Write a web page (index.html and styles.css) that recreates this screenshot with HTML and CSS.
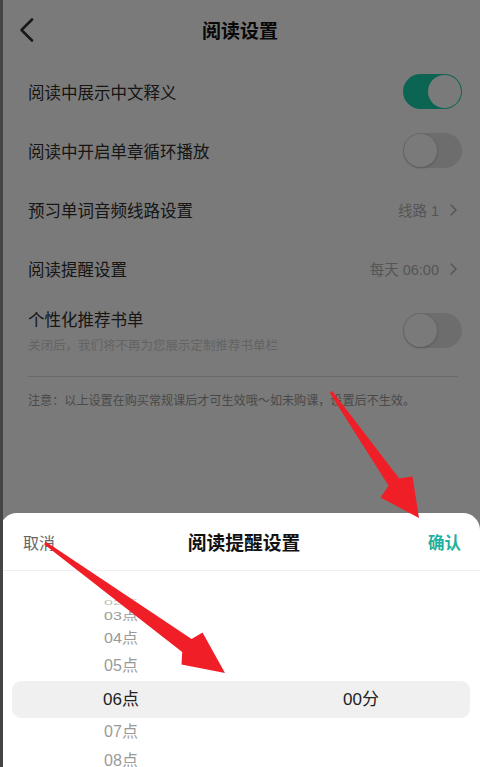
FILE: index.html
```html
<!DOCTYPE html>
<html lang="zh-CN">
<head>
<meta charset="utf-8">
<title>阅读设置</title>
<link rel="stylesheet" href="styles.css">
</head>
<body>
<div class="screen">
  <div class="page">
    <header class="nav">
      <span class="nav-back">
        <svg width="16" height="26" viewBox="0 0 16 26"><path d="M13 2.5 L2.5 13 L13 23.5" fill="none" stroke="#333" stroke-width="2.6" stroke-linecap="round" stroke-linejoin="round"/></svg>
      </span>
      <h1 class="nav-title">阅读设置</h1>
      <span></span>
    </header>

    <div class="row">
      <span class="label">阅读中展示中文释义</span>
      <span class="switch on"><span class="knob"></span></span>
    </div>
    <div class="row">
      <span class="label">阅读中开启单章循环播放</span>
      <span class="switch"><span class="knob"></span></span>
    </div>
    <div class="row">
      <span class="label">预习单词音频线路设置</span>
      <span class="value">线路 1<svg class="chev" width="9" height="14" viewBox="0 0 9 14"><path d="M2 2 L7 7 L2 12" fill="none" stroke="#b5b5b5" stroke-width="1.5" stroke-linecap="round" stroke-linejoin="round"/></svg></span>
    </div>
    <div class="row">
      <span class="label">阅读提醒设置</span>
      <span class="value">每天 06:00<svg class="chev" width="9" height="14" viewBox="0 0 9 14"><path d="M2 2 L7 7 L2 12" fill="none" stroke="#b5b5b5" stroke-width="1.5" stroke-linecap="round" stroke-linejoin="round"/></svg></span>
    </div>
    <div class="row rich">
      <div class="text">
        <div class="label">个性化推荐书单</div>
        <div class="sub">关闭后，我们将不再为您展示定制推荐书单栏</div>
      </div>
      <span class="switch"><span class="knob"></span></span>
    </div>
    <div class="divider"></div>
    <p class="note">注意：以上设置在购买常规课后才可生效哦～如未购课，设置后不生效。</p>
  </div>

  <div class="mask"></div>

  <div class="sheet">
    <div class="sheet-head">
      <span class="cancel">取消</span>
      <span class="sheet-title">阅读提醒设置</span>
      <span class="ok">确认</span>
    </div>
    <div class="picker">
      <div class="prow r02"><span class="cell h">02点</span><span class="cell m"></span></div>
      <div class="prow r03"><span class="cell h">03点</span><span class="cell m"></span></div>
      <div class="prow r04"><span class="cell h">04点</span><span class="cell m"></span></div>
      <div class="prow r05"><span class="cell h">05点</span><span class="cell m"></span></div>
      <div class="prow sel"><span class="cell h">06点</span><span class="cell m">00分</span></div>
      <div class="prow r07"><span class="cell h">07点</span><span class="cell m"></span></div>
      <div class="prow r08"><span class="cell h">08点</span><span class="cell m"></span></div>
    </div>
  </div>

  <div class="edge"></div>

  <svg class="arrows" width="480" height="767" viewBox="0 0 480 767">
    <polygon fill="#f01e26" points="332.2,391.1 399.2,478.4 412.5,476.5 419,518 380.5,497.5 388.6,485.8 329.8,392.9"/>
    <polygon fill="#f01e26" points="45.9,541.8 191.6,639.1 202.5,632.5 225,673 181.5,664.5 182.2,652.1 44.1,544.2"/>
  </svg>
</div>
</body>
</html>
```

FILE: styles.css
```css
html, body {
  margin: 0;
  padding: 0;
}
body {
  font-family: "Noto Sans CJK SC", "Noto Sans", sans-serif;
  background: #fff;
}
.screen {
  position: relative;
  width: 480px;
  height: 767px;
  overflow: hidden;
  background: #fff;
}

/* underlying page */
.page {
  display: flex;
  flex-direction: column;
}
.nav {
  height: 62px;
  display: grid;
  grid-template-columns: 60px 1fr 60px;
  align-items: center;
}
.nav-back {
  padding-left: 19px;
  display: flex;
  align-items: center;
  padding-bottom: 2px;
}
.nav-title {
  margin: 0;
  text-align: center;
  font-size: 19px;
  font-weight: 700;
  color: #111;
  line-height: 24px;
  padding-bottom: 3px;
}
.row {
  height: 59px;
  display: flex;
  align-items: center;
  justify-content: space-between;
  padding: 0 18px 0 28px;
}
.label {
  font-size: 16.5px;
  color: #2e2e2e;
  line-height: 22px;
}
.value {
  display: flex;
  align-items: center;
  gap: 10px;
  font-family: "Liberation Sans", "Noto Sans CJK SC", sans-serif;
  font-size: 14.5px;
  color: #b3b3b3;
  padding-right: 4px;
}
.chev {
  display: block;
}
.row.rich {
  height: auto;
  padding-top: 10px;
  padding-bottom: 23px;
}
.text {
  display: flex;
  flex-direction: column;
  gap: 6px;
}
.sub {
  font-size: 12.5px;
  line-height: 17px;
  color: #cfcfcf;
}
.switch {
  box-sizing: border-box;
  width: 59px;
  height: 35px;
  border-radius: 18px;
  background: #e4e4e4;
  display: flex;
  align-items: center;
  padding: 1px;
}
.switch.on {
  background: #1bd3ae;
  justify-content: flex-end;
}
.knob {
  width: 33px;
  height: 33px;
  border-radius: 50%;
  background: #fff;
  box-shadow: 0 1px 3px rgba(0,0,0,0.22);
}
.switch.on .knob {
  box-shadow: none;
}
.divider {
  height: 1px;
  background: #dcdcdc;
  margin: 0 22px 0 28px;
}
.note {
  margin: 0;
  padding: 14px 28px 0;
  font-size: 12.1px;
  line-height: 17px;
  color: #999;
  white-space: nowrap;
}

/* dim */
.mask {
  position: absolute;
  inset: 0;
  background: rgba(0,0,0,0.52);
}
.edge {
  position: absolute;
  left: 0;
  top: 0;
  bottom: 0;
  width: 3px;
  background: #444;
}

/* bottom sheet */
.sheet {
  position: absolute;
  left: 0;
  right: 0;
  top: 513px;
  bottom: 0;
  background: #fff;
  border-radius: 17px 17px 0 0;
  overflow: hidden;
}
.sheet-head {
  height: 57px;
  border-bottom: 1px solid #efefef;
  display: grid;
  grid-template-columns: 1fr auto 1fr;
  align-items: center;
  padding: 0 19px 0 23px;
}
.cancel {
  font-size: 16px;
  color: #666;
  line-height: 22px;
}
.sheet-title {
  font-size: 18.8px;
  font-weight: 700;
  color: #111;
  line-height: 24px;
  padding-left: 4px;
}
.ok {
  justify-self: end;
  font-size: 16.5px;
  font-weight: 700;
  color: #1fb0a0;
  line-height: 22px;
}
.picker {
  padding-top: 22px;
  display: flex;
  flex-direction: column;
}
.prow {
  display: grid;
  grid-template-columns: 218px 1fr;
  align-items: center;
  margin: 0 10px 0 12px;
  color: #9a9a9a;
  font-family: "Liberation Sans", "Noto Sans CJK SC", sans-serif;
  font-size: 16px;
}
.cell {
  text-align: center;
  line-height: 20px;
  display: block;
}
.cell.m {
  padding-left: 22px;
}
.r02 { height: 14px; }
.r02 .h { transform: scaleY(0.4); color: #bbb; }
.r03 { height: 19px; }
.r03 .h { transform: scaleY(0.65); }
.r04 { height: 24px; }
.r04 .h { transform: scaleY(0.9); }
.r05 { height: 31px; }
.prow.sel {
  height: 37px;
  background: #f0f0f0;
  border-radius: 9px;
  color: #222;
  font-size: 17px;
}
.r07 { height: 28px; }
.r08 { height: 30px; }

.arrows {
  position: absolute;
  left: 0;
  top: 0;
  pointer-events: none;
}
```
